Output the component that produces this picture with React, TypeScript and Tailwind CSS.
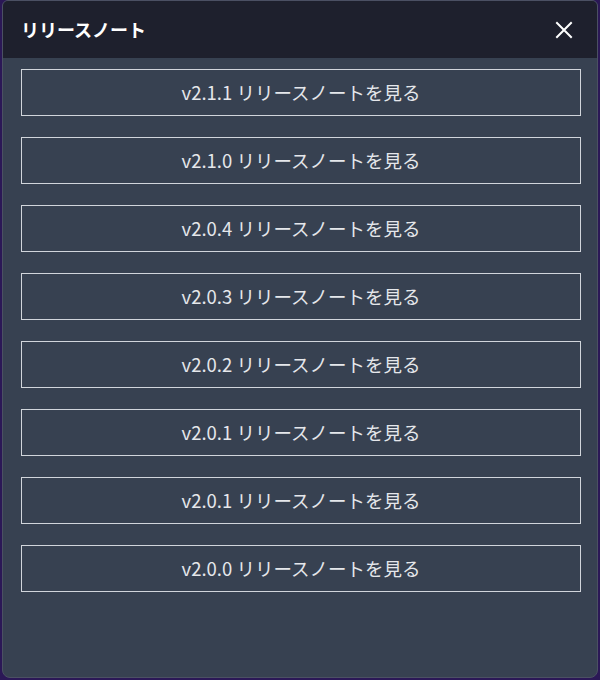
const versions = [
  "v2.1.1",
  "v2.1.0",
  "v2.0.4",
  "v2.0.3",
  "v2.0.2",
  "v2.0.1",
  "v2.0.1",
  "v2.0.0",
];

export default function App() {
  return (
    <div
      className="h-[680px] w-[600px] bg-[#2b1856] px-[2px] pb-[2px]"
      style={{ fontFamily: '"Noto Sans CJK JP", "Noto Sans", sans-serif' }}
    >
      <div className="flex h-full flex-col overflow-hidden rounded-b-lg rounded-t-md border border-[#4b5063] bg-[#374151]">
        <div className="flex h-[57px] shrink-0 items-center justify-between bg-[#1e202d] pl-[18px] pr-[24px]">
          <h2 className="text-[18px] font-bold text-white">リリースノート</h2>
          <button className="text-white">
            <svg width="18" height="18" viewBox="0 0 18 18" fill="none" stroke="currentColor" strokeWidth="2" strokeLinecap="square">
              <path d="M2 2 L16 16 M16 2 L2 16" />
            </svg>
          </button>
        </div>

        <div className="flex flex-col gap-[21px] pl-[18px] pr-[16px] pt-[11px]">
          {versions.map((v, i) => (
            <button
              key={i}
              className="h-[47px] w-full border border-[#d1d5db] text-[18.5px] font-normal text-[#e5e7eb]"
            >
              {v} リリースノートを見る
            </button>
          ))}
        </div>
      </div>
    </div>
  );
}
